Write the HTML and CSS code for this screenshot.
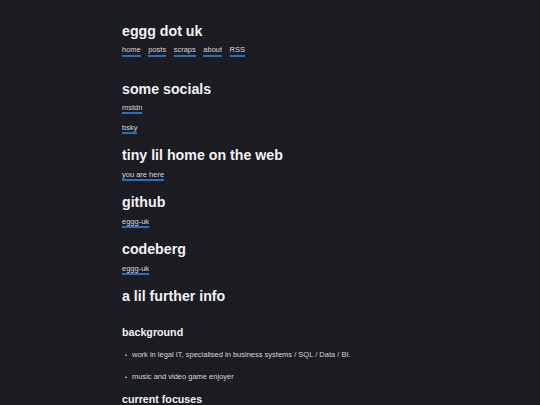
FILE: index.html
```html
<!DOCTYPE html>
<html lang="en">
<head>
<meta charset="utf-8">
<title>eggg dot uk</title>
<link rel="stylesheet" href="styles.css">
</head>
<body>
<main class="page">
  <header class="site-header">
    <h1 class="title">eggg dot uk</h1>
    <nav class="nav">
      <a href="#">home</a>
      <a href="#">posts</a>
      <a href="#">scraps</a>
      <a href="#">about</a>
      <a href="#">RSS</a>
    </nav>
  </header>

  <h2 class="h2 first">some socials</h2>
  <p class="p"><a href="#">mstdn</a></p>
  <p class="p"><a href="#">bsky</a></p>

  <h2 class="h2">tiny lil home on the web</h2>
  <p class="p"><a href="#">you are here</a></p>

  <h2 class="h2">github</h2>
  <p class="p"><a href="#">eggg-uk</a></p>

  <h2 class="h2">codeberg</h2>
  <p class="p"><a href="#">eggg-uk</a></p>

  <h2 class="h2">a lil further info</h2>

  <h3 class="h3">background</h3>
  <ul class="list">
    <li>work in legal IT, specialised in business systems / SQL / Data / BI.</li>
    <li>music and video game enjoyer</li>
  </ul>

  <h3 class="h3 last">current focuses</h3>
</main>
</body>
</html>
```

FILE: styles.css
```css
html, body {
  margin: 0;
  padding: 0;
}

body {
  background-color: #1b1b22;
  background-image: radial-gradient(circle, rgba(255,255,255,0.015) 0.6px, transparent 0.9px);
  background-size: 4px 4px;
  color: #d6d6d6;
  font-family: "Liberation Sans", Arial, sans-serif;
  font-size: 7.5px;
  height: 405px;
  overflow: hidden;
}

.page {
  width: 296px;
  margin: 0 auto;
  padding-top: 23px;
}

a {
  color: #d8d8d8;
  text-decoration: none;
  border-bottom: 2px solid #2a6fbe;
}

.title {
  font-size: 14.2px;
  line-height: 16px;
  font-weight: 700;
  color: #f2f2f2;
  margin: 0 0 5.7px;
}

.nav {
  display: flex;
  gap: 7.5px;
  line-height: 10px;
}

.h2 {
  font-size: 14.2px;
  line-height: 16px;
  font-weight: 700;
  color: #f2f2f2;
  margin: 14.3px 0 6.5px;
}

.h2.first {
  margin-top: 24px;
}

.p {
  margin: 0 0 10px;
  line-height: 10px;
}

.h3 {
  font-size: 10.7px;
  line-height: 12px;
  font-weight: 700;
  color: #f2f2f2;
  margin: 22px 0 12px;
}

.list {
  margin: 0;
  padding: 0;
  list-style: none;
  line-height: 10px;
}

.list li {
  display: flex;
  margin-bottom: 12px;
}

.list li::before {
  content: "\2022";
  flex: 0 0 10px;
  box-sizing: border-box;
  padding-left: 3px;
  font-size: 6px;
}

.h3.last {
  margin-top: -0.6px;
}
```
